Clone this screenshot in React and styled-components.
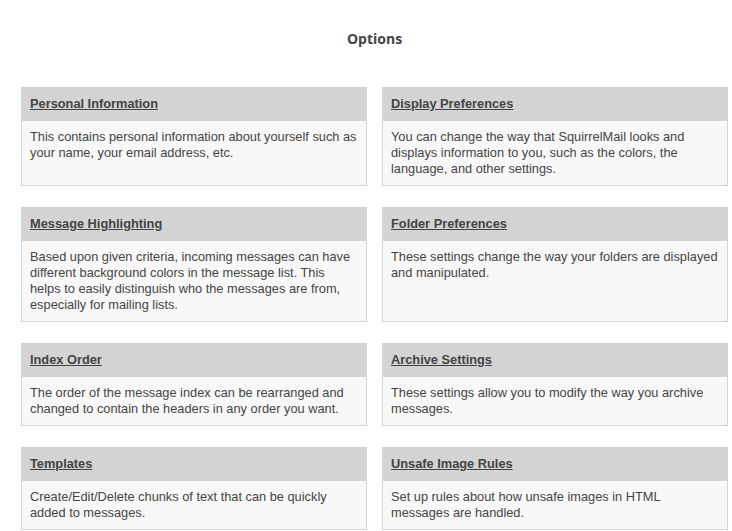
import React from 'react';
import styled, { createGlobalStyle } from 'styled-components';

const GlobalStyle = createGlobalStyle`
  html, body {
    margin: 0;
    padding: 0;
    background: #fff;
  }
`;

const Page = styled.div`
  padding: 0 4px 0 21px;
  font-family: 'Liberation Sans', Arial, sans-serif;
  color: #444;
`;

const Title = styled.h1`
  margin: 0;
  padding: 30px 0 0;
  height: 87px;
  box-sizing: border-box;
  text-align: center;
  font-family: 'Open Sans', 'Liberation Sans', sans-serif;
  font-size: 14px;
  font-weight: 700;
  color: #444;
  line-height: 18px;
`;

const Grid = styled.div`
  display: grid;
  grid-template-columns: 1fr 1fr;
  column-gap: 15px;
  row-gap: 21px;
`;

const Card = styled.div`
  display: flex;
  flex-direction: column;
  border: 1px solid #d3d3d3;
  background: #f8f8f8;
`;

const CardHeader = styled.div`
  background: #d4d4d4;
  height: 33px;
  box-sizing: border-box;
  display: flex;
  align-items: center;
  padding: 0 8px 2px;
`;

const HeaderLink = styled.a`
  font-family: 'Liberation Sans', Arial, sans-serif;
  font-size: 12.8px;
  font-weight: 700;
  color: #444;
  text-decoration: underline;
  cursor: pointer;
`;

const CardBody = styled.p`
  flex: 1;
  margin: 0;
  padding: 8px;
  font-family: 'Liberation Sans', Arial, sans-serif;
  font-size: 12.8px;
  line-height: 16px;
  color: #444;
`;

const options = [
  {
    title: 'Personal Information',
    text: 'This contains personal information about yourself such as your name, your email address, etc.',
  },
  {
    title: 'Display Preferences',
    text: 'You can change the way that SquirrelMail looks and displays information to you, such as the colors, the language, and other settings.',
  },
  {
    title: 'Message Highlighting',
    text: 'Based upon given criteria, incoming messages can have different background colors in the message list. This helps to easily distinguish who the messages are from, especially for mailing lists.',
  },
  {
    title: 'Folder Preferences',
    text: 'These settings change the way your folders are displayed and manipulated.',
  },
  {
    title: 'Index Order',
    text: 'The order of the message index can be rearranged and changed to contain the headers in any order you want.',
  },
  {
    title: 'Archive Settings',
    text: 'These settings allow you to modify the way you archive messages.',
  },
  {
    title: 'Templates',
    text: 'Create/Edit/Delete chunks of text that can be quickly added to messages.',
  },
  {
    title: 'Unsafe Image Rules',
    text: 'Set up rules about how unsafe images in HTML messages are handled.',
  },
];

const App = () => {
  return (
    <Page>
      <GlobalStyle />
      <Title>Options</Title>
      <Grid>
        {options.map((opt) => (
          <Card key={opt.title}>
            <CardHeader>
              <HeaderLink>{opt.title}</HeaderLink>
            </CardHeader>
            <CardBody>{opt.text}</CardBody>
          </Card>
        ))}
      </Grid>
    </Page>
  );
};

export default App;
